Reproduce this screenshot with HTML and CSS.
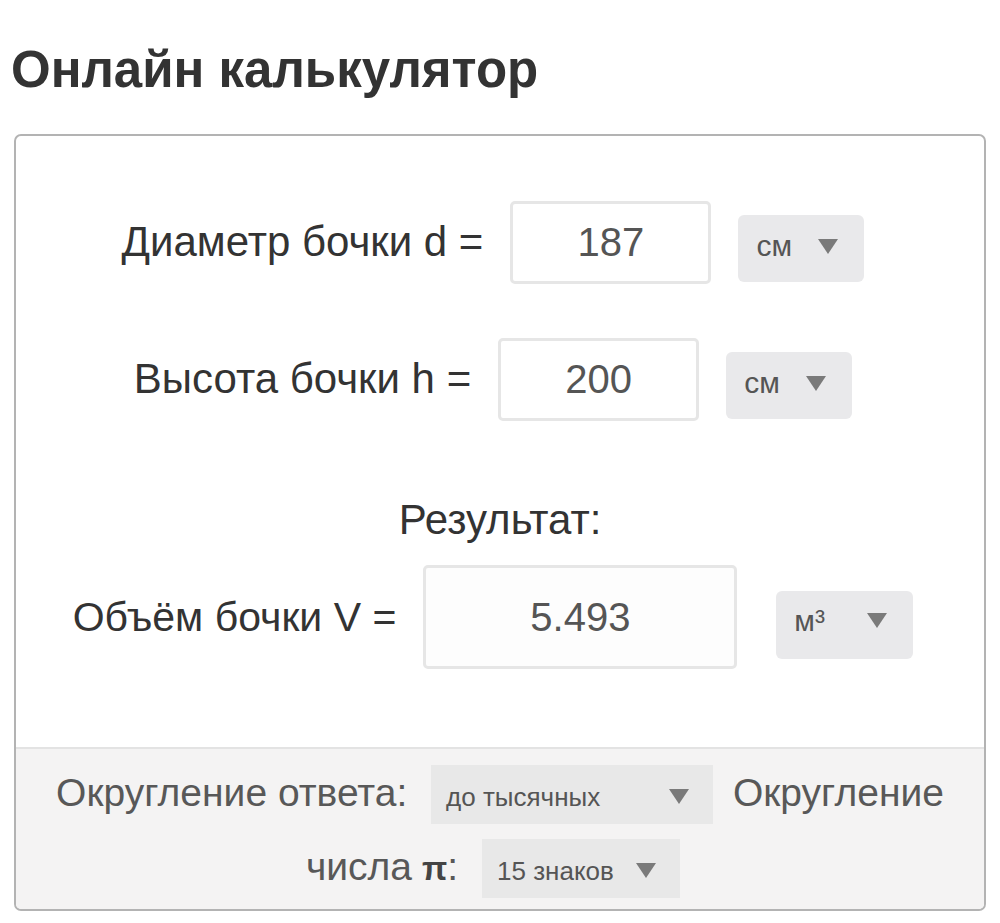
FILE: index.html
```html
<!DOCTYPE html>
<html lang="ru">
<head>
    <meta charset="UTF-8">
    <meta name="viewport" content="width=device-width, initial-scale=1.0">
    <title>Онлайн калькулятор</title>
    <link rel="stylesheet" href="styles.css">
</head>
<body>
    <div class="page">
        <h1>Онлайн калькулятор</h1>

        <div class="calc">
            <div class="calc-body">
                <div class="row">
                    <label class="label" for="diam">Диаметр бочки d =</label>
                    <input class="field" id="diam" type="text" value="187">
                    <div class="unit unit-sm"><span>см</span><span class="arrow"></span></div>
                </div>

                <div class="row row-h">
                    <label class="label" for="height">Высота бочки h =</label>
                    <input class="field" id="height" type="text" value="200">
                    <div class="unit unit-sm"><span>см</span><span class="arrow"></span></div>
                </div>

                <p class="result-title">Результат:</p>

                <div class="row">
                    <label class="label label-vol" for="vol">Объём бочки V =</label>
                    <input class="field field-result" id="vol" type="text" value="5.493" readonly>
                    <div class="unit unit-vol"><span>м³</span><span class="arrow"></span></div>
                </div>
            </div>

            <div class="calc-footer">
                <span>Округление ответа:</span>
                <div class="pick pick-round"><span>до тысячных</span><span class="arrow"></span></div>
                <span>Округление</span>
                <span>числа</span><b>π</b><span>:</span>
                <div class="pick pick-pi"><span>15 знаков</span><span class="arrow"></span></div>
            </div>
        </div>
    </div>
</body>
</html>
```

FILE: styles.css
```css
body {
    margin: 0;
    padding: 0;
    background-color: #fff;
    font-family: "Liberation Sans", Arial, sans-serif;
    color: #333;
}

.page {
    padding: 0 14px;
}

h1 {
    font-size: 51px;
    line-height: 58px;
    font-weight: bold;
    color: #333;
    margin: 41px 0 35px -3px;
}

.calc {
    border: 2px solid #b3b3b3;
    border-radius: 7px;
    overflow: hidden;
}

.calc-body {
    padding: 65px 0 78px;
}

.row {
    display: flex;
    justify-content: center;
    align-items: baseline;
    gap: 27px;
    padding-right: 14px;
}

.row-h {
    margin-top: 54px;
}

.label {
    font-size: 42px;
    line-height: 50px;
    color: #333;
}

.label-vol {
    font-size: 41px;
}

.field {
    box-sizing: border-box;
    width: 201px;
    height: 83px;
    border: 3px solid #e6e6e6;
    border-radius: 5px;
    background-color: #fff;
    font-family: inherit;
    font-size: 40px;
    color: #555;
    text-align: center;
    padding: 0;
    outline: none;
}

.field-result {
    width: 314px;
    height: 104px;
    background-color: #fdfdfd;
}

.unit {
    box-sizing: border-box;
    display: flex;
    align-items: center;
    justify-content: space-between;
    height: 67px;
    padding: 0 26px 4px 18px;
    background-color: #e9e9eb;
    border-radius: 6px;
    font-size: 30px;
    color: #555;
}

.unit-sm {
    width: 126px;
}

.unit-vol {
    width: 137px;
    height: 68px;
    padding-bottom: 8px;
    margin-left: 12px;
}

.arrow {
    width: 0;
    height: 0;
    border-left: 10px solid transparent;
    border-right: 10px solid transparent;
    border-top: 15px solid #7a7a7a;
}

.result-title {
    font-size: 42px;
    line-height: 50px;
    text-align: center;
    margin: 74px 0 20px;
    color: #333;
}

/* нижняя панель с округлением */
.calc-footer {
    background-color: #f4f3f3;
    border-top: 2px solid #e3e3e3;
    padding: 9px 20px 3px;
    text-align: center;
    font-size: 39px;
    line-height: 44px;
    color: #585858;
}

.calc-footer b {
    font-size: 33px;
    color: #444;
    margin-left: 10px;
}

.pick {
    box-sizing: border-box;
    display: inline-flex;
    align-items: center;
    justify-content: space-between;
    height: 59px;
    padding: 4px 24px 0 15px;
    background-color: #e8e8e8;
    font-size: 26px;
    line-height: 30px;
    color: #555;
    vertical-align: baseline;
}

.pick-round {
    width: 282px;
    margin: 7px 9px 8px 13px;
}

.pick-pi {
    width: 198px;
    margin: 7px 14px 8px 13px;
}
```
